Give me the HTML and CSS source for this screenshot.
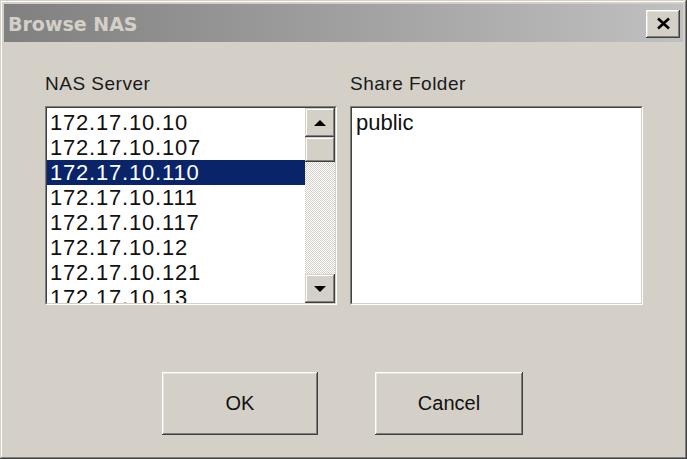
FILE: index.html
```html
<!DOCTYPE html>
<html>
<head>
<meta charset="utf-8">
<link rel="stylesheet" href="styles.css">
</head>
<body>
<div class="window">
  <div class="titlebar">
    <span class="title">Browse NAS</span>
    <div class="close">
      <svg width="15" height="13" viewBox="0 0 15 13"><path d="M2 1.5 L13 11.5 M13 1.5 L2 11.5" stroke="#000" stroke-width="2.6" fill="none"/></svg>
    </div>
  </div>
  <div class="content">
    <div class="panes">
      <div class="pane pane-server">
        <div class="label">NAS Server</div>
        <div class="listbox">
          <div class="listbox-inner">
            <div class="items servers">
              <div class="item">172.17.10.10</div>
              <div class="item">172.17.10.107</div>
              <div class="item selected">172.17.10.110</div>
              <div class="item">172.17.10.111</div>
              <div class="item">172.17.10.117</div>
              <div class="item">172.17.10.12</div>
              <div class="item">172.17.10.121</div>
              <div class="item">172.17.10.13</div>
            </div>
            <div class="scrollbar">
              <div class="sbtn"><span class="arrow-up"></span></div>
              <div class="thumb"></div>
              <div class="track"></div>
              <div class="sbtn"><span class="arrow-down"></span></div>
            </div>
          </div>
        </div>
      </div>
      <div class="pane pane-share">
        <div class="label">Share Folder</div>
        <div class="listbox">
          <div class="listbox-inner">
            <div class="items">
              <div class="item">public</div>
            </div>
          </div>
        </div>
      </div>
    </div>
    <div class="buttons">
      <div class="btn btn-ok">OK</div>
      <div class="btn btn-cancel">Cancel</div>
    </div>
  </div>
</div>
</body>
</html>
```
FILE: styles.css
```css
html, body {
  margin: 0;
  padding: 0;
  background: #d4d0c8;
}
.window {
  width: 687px;
  height: 459px;
  box-sizing: border-box;
  padding: 4px;
  background: #d4d0c8;
  display: flex;
  flex-direction: column;
  box-shadow: inset -1px -1px #404040, inset 1px 1px #d4d0c8, inset -2px -2px #808080, inset 2px 2px #ffffff;
  overflow: hidden;
}
.titlebar {
  height: 38px;
  flex: none;
  display: flex;
  align-items: center;
  justify-content: space-between;
  background: linear-gradient(to right, #808080, #c0c0c0);
  padding-left: 4px;
  padding-right: 3px;
}
.title {
  font-family: "DejaVu Sans", sans-serif;
  font-weight: bold;
  font-size: 19px;
  color: #d4d0c8;
  margin-top: 2px;
}
.close {
  width: 34px;
  height: 28px;
  margin-top: 2px;
  box-sizing: border-box;
  background: #d4d0c8;
  box-shadow: inset -1px -1px #404040, inset 1px 1px #ffffff, inset -2px -2px #808080, inset 2px 2px #e4e2dc;
  display: flex;
  align-items: center;
  justify-content: center;
}
.close svg { display: block; margin-top: -1px; }
.content {
  flex: 1;
  padding: 31px 0 0 41px;
  font-family: "Liberation Sans", Arial, sans-serif;
  color: #000;
}
.panes {
  display: flex;
  gap: 13px;
}
.pane-server { width: 292px; }
.pane-share { width: 293px; }
.label {
  font-size: 19px;
  letter-spacing: 0.5px;
  line-height: 22px;
  height: 22px;
  margin-bottom: 11px;
  color: #1a1a1a;
}
.listbox {
  height: 199px;
  box-sizing: border-box;
  border: 1px solid;
  border-color: #808080 #ffffff #ffffff #808080;
  background: #fff;
}
.listbox-inner {
  height: 100%;
  box-sizing: border-box;
  border: 1px solid;
  border-color: #404040 #d4d0c8 #d4d0c8 #404040;
  display: flex;
}
.items {
  flex: 1;
  overflow: hidden;
  padding-top: 2px;
  background: #fff;
}
.item {
  height: 25px;
  line-height: 25px;
  font-size: 22px;
  padding-left: 4px;
  white-space: nowrap;
  color: #111;
}
.servers .item {
  letter-spacing: 0.8px;
  padding-left: 3px;
}
.item.selected {
  background: #0a246a;
  color: #fff;
}
.scrollbar {
  width: 30px;
  flex: none;
  display: flex;
  flex-direction: column;
}
.sbtn, .thumb {
  background: #d4d0c8;
  box-shadow: inset -1px -1px #404040, inset 1px 1px #d4d0c8, inset -2px -2px #808080, inset 2px 2px #ffffff;
}
.sbtn {
  height: 29px;
  display: flex;
  align-items: center;
  justify-content: center;
}
.thumb { height: 25px; }
.track {
  flex: 1;
  background: repeating-conic-gradient(#d4d0c8 0 25%, #ffffff 0 50%) 0 0 / 2px 2px;
}
.arrow-up, .arrow-down {
  width: 0;
  height: 0;
  border-left: 6px solid transparent;
  border-right: 6px solid transparent;
}
.arrow-up { border-bottom: 6px solid #000; }
.arrow-down { border-top: 6px solid #000; }
.buttons {
  display: flex;
  gap: 57px;
  margin-top: 67px;
  padding-left: 117px;
}
.btn {
  height: 63px;
  box-sizing: border-box;
  display: flex;
  align-items: center;
  justify-content: center;
  font-size: 20px;
  color: #111;
  background: #d4d0c8;
  box-shadow: inset -1px -1px #404040, inset 1px 1px #ffffff, inset -2px -2px #808080, inset 2px 2px #e4e2dc;
}
.btn-ok { width: 156px; }
.btn-cancel { width: 148px; }
```
